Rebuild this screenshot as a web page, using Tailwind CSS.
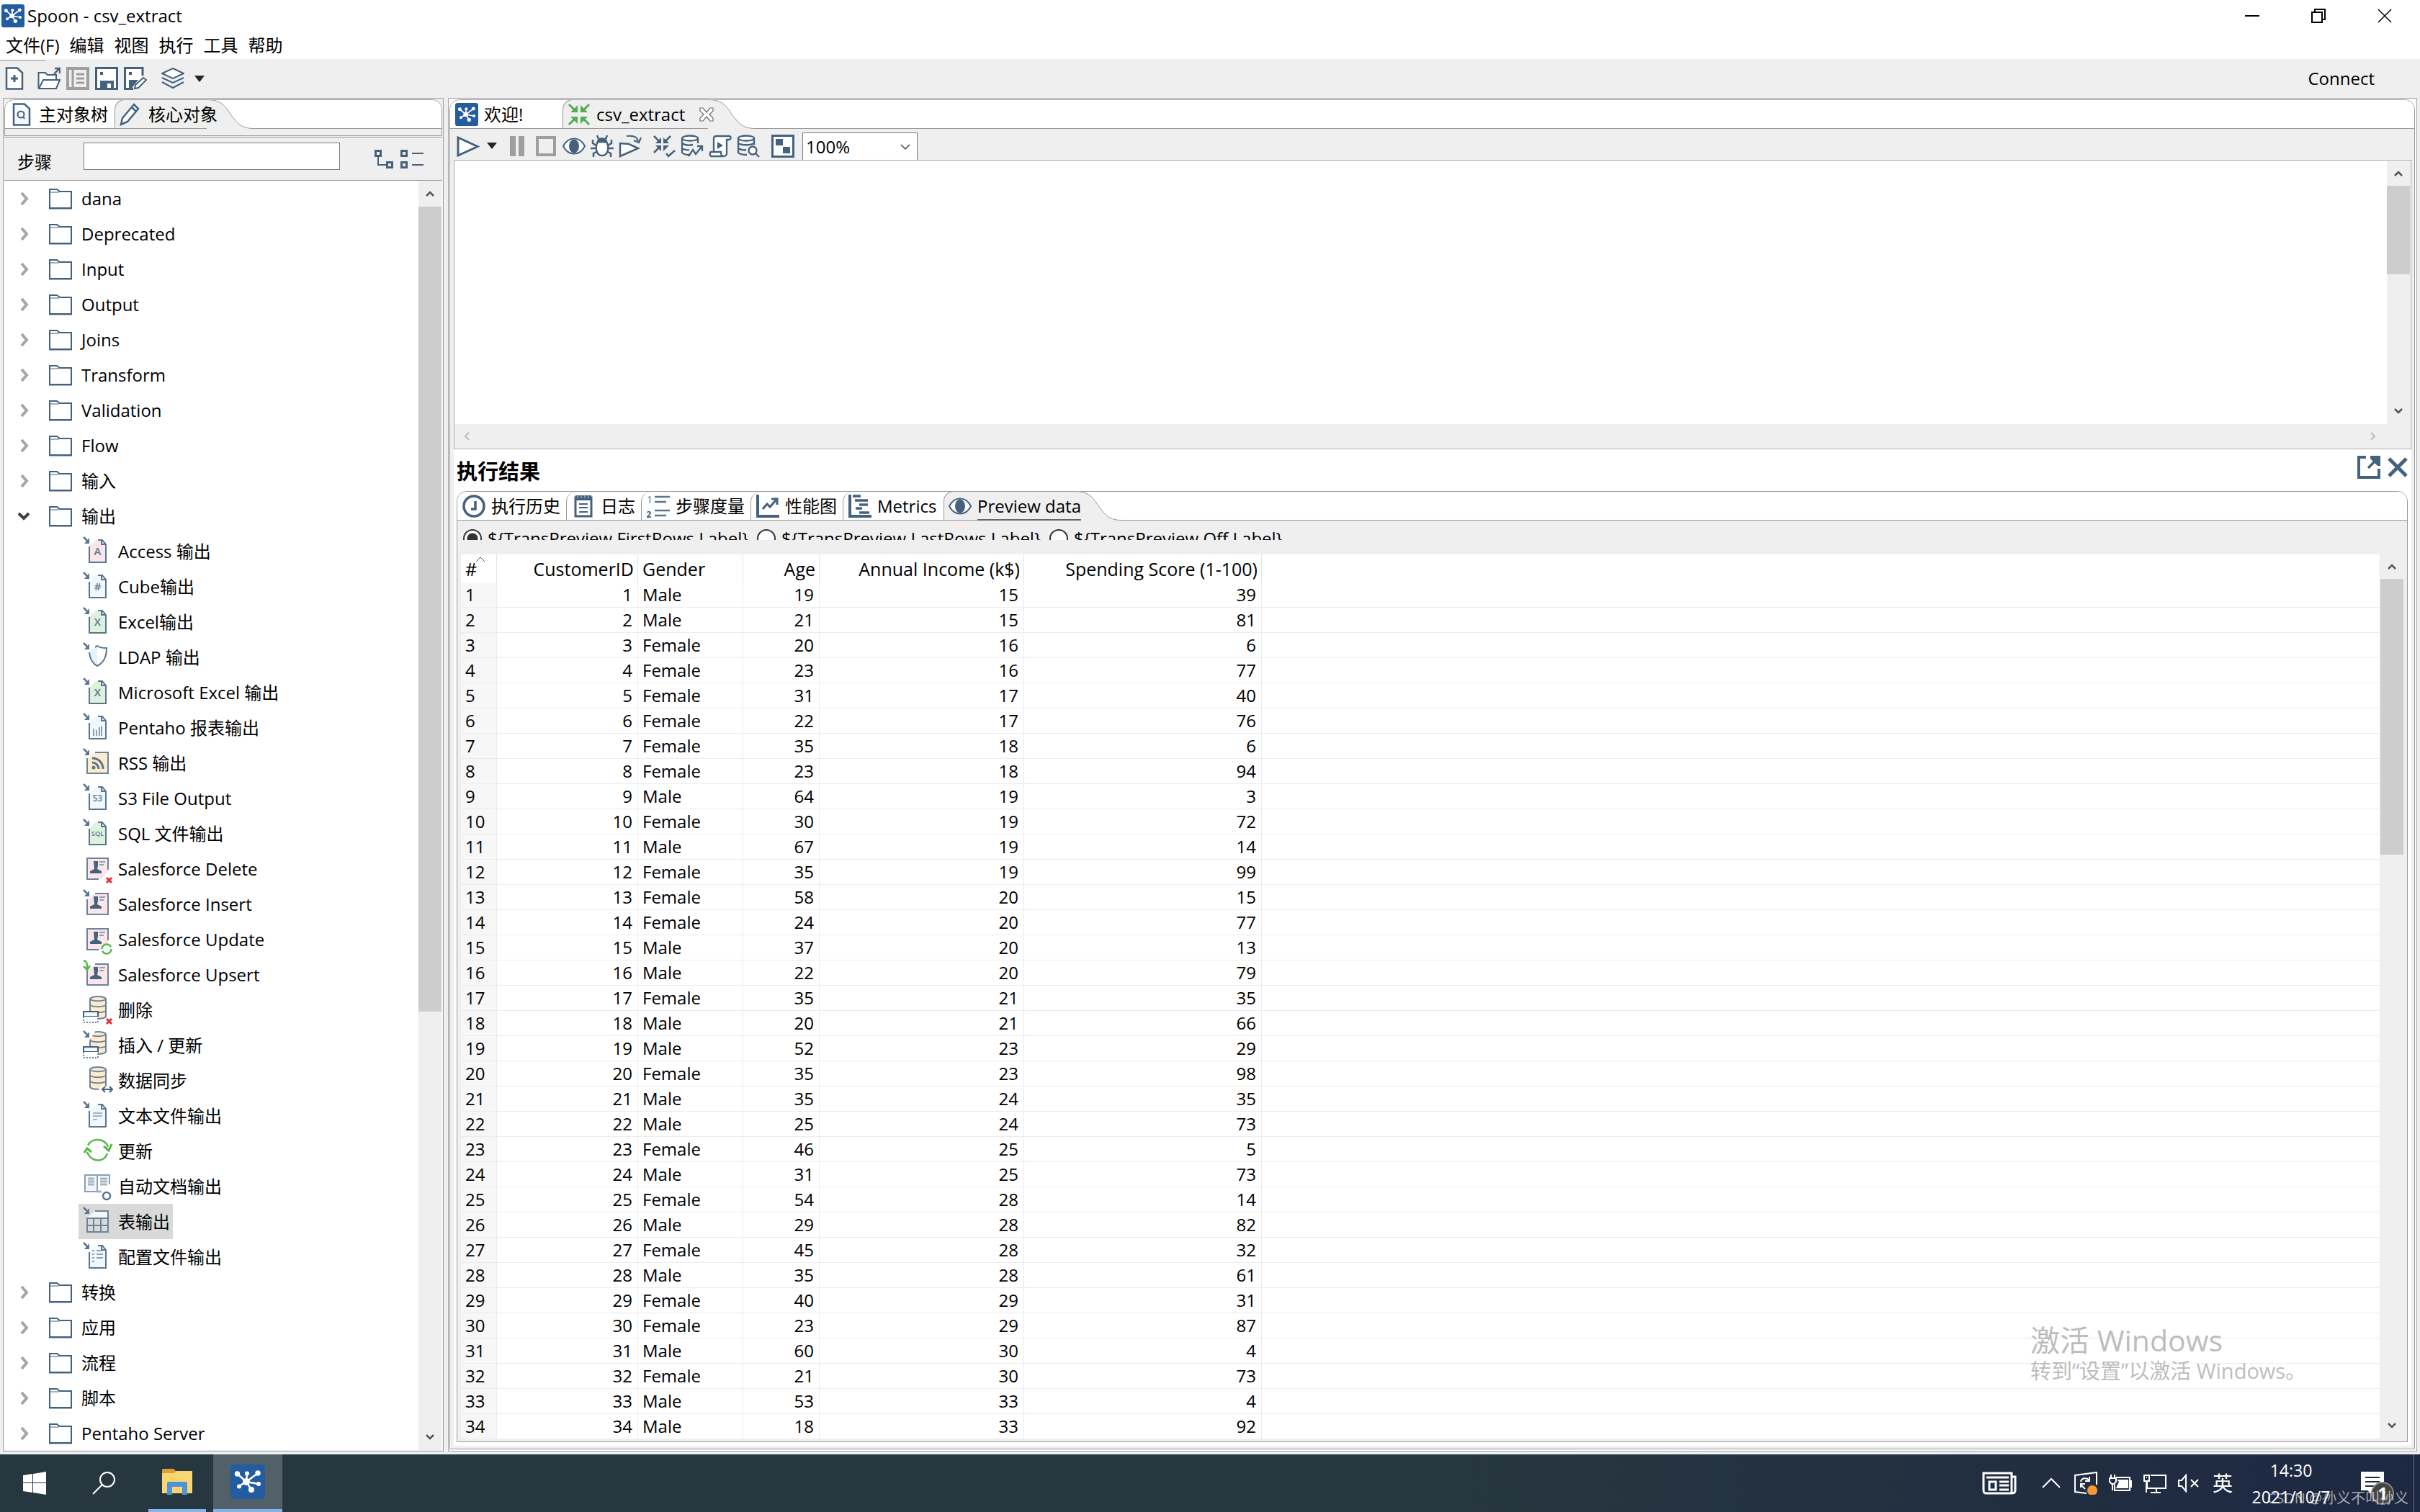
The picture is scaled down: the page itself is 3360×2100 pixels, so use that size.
<!DOCTYPE html>
<html lang="zh-CN">
<head>
  <meta charset="UTF-8">
  <meta name="viewport" content="width=device-width, initial-scale=1.0">
  <title>Spoon - csv_extract</title>
  <script src="https://cdn.jsdelivr.net/npm/@tailwindcss/browser@4"></script>
</head>
<body class="relative flex h-screen flex-col overflow-hidden bg-[#efefef] font-['Open_Sans','Noto_Sans_CJK_SC',sans-serif] text-[24px] leading-[28px] text-black">

  <!-- Icon sprite -->
  <svg class="hidden" xmlns="http://www.w3.org/2000/svg">
    <symbol id="spoon" viewBox="0 0 48 48">
      <rect width="48" height="48" rx="5" fill="#235c9f"/>
      <path d="M22 24 9.500 13M22 24 23 12M22 24 38 12M22 24 39 27M22 24 29 35M22 24 12 30" stroke="#fff" stroke-width="2.500"/>
      <g fill="#fff"><circle cx="22" cy="24" r="5"/><circle cx="9.500" cy="13" r="3.700"/><circle cx="23" cy="12.500" r="3"/><circle cx="38" cy="12" r="3.700"/><circle cx="39" cy="27" r="3"/><circle cx="29" cy="35" r="4"/><circle cx="12" cy="30.500" r="3"/></g>
    </symbol>
    <symbol id="new" viewBox="0 0 32 32"><path d="M5 1.500H20L27 8V30.500H5Z" fill="#fff" stroke="#44617d" stroke-width="2.500"/><path d="M16 11V21M11 16H21" stroke="#44617d" stroke-width="3"/></symbol>
    <symbol id="open" viewBox="0 0 32 32"><path d="M1.500 29V8H11L14 11H26V18" fill="#fff" stroke="#44617d" stroke-width="2"/><path d="M2 30 8 18H31L26 30Z" fill="#fff" stroke="#44617d" stroke-width="2"/><path d="M23 10 30 2M24 2H31V9" fill="none" stroke="#44617d" stroke-width="2.500"/></symbol>
    <symbol id="explore" viewBox="0 0 32 32"><rect x="2" y="2" width="28" height="28" fill="#efefef" stroke="#9e9e9e" stroke-width="4"/><path d="M9 3V29M14 10H25M14 16H25M14 22H25" stroke="#9e9e9e" stroke-width="3"/></symbol>
    <symbol id="save" viewBox="0 0 32 32"><path d="M1.500 1.500H30.500V30.500H1.500Z" fill="#fff" stroke="#44617d" stroke-width="3"/><path d="M7 7H11V11H7Z" fill="#44617d"/><path d="M7 19H26V30H22V23H17V30H7Z" fill="#44617d"/></symbol>
    <symbol id="saveas" viewBox="0 0 32 32"><path d="M26 12V1.500H1.500V30.500H13" fill="#fff" stroke="#44617d" stroke-width="3"/><path d="M7 7H11V11H7ZM7 18H20L12 28V30H7Z" fill="#44617d"/><path d="M15 30 16 25 27 15 31 18 20 29Z" fill="#fff" stroke="#44617d" stroke-width="2"/></symbol>
    <symbol id="layers" viewBox="0 0 32 32"><g fill="none" stroke="#44617d" stroke-width="2"><path d="M16 2 31 9 16 16 1 9Z" fill="#fff"/><path d="M1 15 16 22 31 15M1 21 16 29 31 21"/></g></symbol>
    <symbol id="filesearch" viewBox="0 0 32 32"><path d="M5 1.500H20L27 8V30.500H5Z" fill="#f4f8fb" stroke="#44617d" stroke-width="2.500"/><circle cx="15" cy="16" r="4.500" fill="none" stroke="#44617d" stroke-width="2"/><path d="M18 19 20 22" stroke="#44617d" stroke-width="2"/></symbol>
    <symbol id="pencil" viewBox="0 0 32 32"><path d="M2 30 4 21 20 2 26 8 11 26ZM17 6 23 12" fill="#fff" stroke="#44617d" stroke-width="2.500"/></symbol>
    <symbol id="expand" viewBox="0 0 30 28"><g fill="none" stroke="#44617d" stroke-width="3"><path d="M2.500 2.500H9.500V9.500H2.500ZM18.500 18.500H25.500V25.500H18.500Z"/><path d="M6 11V22H17" stroke-width="2"/></g></symbol>
    <symbol id="collapse" viewBox="0 0 34 28"><path d="M2.500 2.500H9.500V9.500H2.500ZM2.500 18.500H9.500V25.500H2.500Z" fill="none" stroke="#44617d" stroke-width="3"/><path d="M17 6H33M17 22H33" stroke="#44617d" stroke-width="2"/></symbol>
    <symbol id="folder" viewBox="0 0 32 30"><path d="M1 28V2H11L15 5H31V28Z" fill="#fff" stroke="#44617d" stroke-width="2"/><path d="M2 6H14" stroke="#44617d" stroke-width="1"/><path d="M0 29.500H32" stroke="#a5b4c2" stroke-width="1"/></symbol>
    <symbol id="transform" viewBox="0 0 32 32"><path d="M2 2 12 12M30 2 20 12M2 30 12 20M30 30 20 20" stroke="#55ad51" stroke-width="3"/><path d="M4 13H14V3ZM28 13H18V3ZM4 19H14V29ZM28 19H18V29Z" fill="#55ad51"/></symbol>
    <symbol id="closetab" viewBox="0 0 20 20"><path d="M1 1H5L10 7 15 1H19V5L14 10 19 15V19H15L10 13 5 19H1V15L6 10 1 5Z" fill="#fff" stroke="#6b6b6b" stroke-width="1.200"/></symbol>
    <symbol id="play" viewBox="0 0 32 32"><path d="M2 4V29L29 16.500Z" fill="#fff" stroke="#44617d" stroke-width="3"/></symbol>
    <symbol id="eye" viewBox="0 0 32 32"><path d="M1 16C8 2 24 2 31 16 24 30 8 30 1 16Z" fill="#fff" stroke="#44617d" stroke-width="2"/><ellipse cx="16" cy="16" rx="7" ry="9.500" fill="#44617d"/></symbol>
    <symbol id="bug" viewBox="0 0 32 32"><g fill="none" stroke="#44617d" stroke-width="2.500"><path d="M10 10C6 16 7 29 16 29S26 16 22 10Z" fill="#fff"/><path d="M10 10C10 4 22 4 22 10Z" fill="#44617d"/><path d="M11 6 9 1M21 6 23 1M8 15 3 12V7M24 15 29 12V7M7 19H0M25 19H32M8 24 4 26V31M24 24 28 26V31"/></g></symbol>
    <symbol id="replay" viewBox="0 0 32 32"><path d="M2 12V30L27 19 14 13Z" fill="#fff" stroke="#44617d" stroke-width="2.500"/><path d="M11 2C20 1 26 3 27 9M21 8 28 11 31 4" fill="none" stroke="#44617d" stroke-width="2.200"/></symbol>
    <symbol id="verify" viewBox="0 0 32 32"><path d="M2 2 11 11M25 2 16 11M2 25 11 16" stroke="#44617d" stroke-width="2.500"/><path d="M4 12H12V4ZM23 12H15V4ZM4 15H12V23ZM15 15H23L15 23Z" fill="#44617d"/><path d="M19 26 22 30 31 22" fill="none" stroke="#44617d" stroke-width="2.500"/></symbol>
    <symbol id="impact" viewBox="0 0 32 32"><g fill="none" stroke="#44617d" stroke-width="2.300"><path d="M2 5V25C5 28 9 28 12 28M24 5V12" fill="#fff"/><ellipse cx="13" cy="5" rx="11" ry="3.500" fill="#fff"/><path d="M2 12C6 15 12 15 17 14M2 19C5 21 8 22 12 21M11 30 17 21 21 27 29 17M23 16H30V23"/></g></symbol>
    <symbol id="script" viewBox="0 0 32 32"><g fill="#fff" stroke="#44617d" stroke-width="2.300"><path d="M7 24V5C7 2 9 2 11 2H28C32 2 31 7 28 7H25V26C25 30 22 30 20 30"/><path d="M20 30H4C1 30 1 24 4 24H17C17 27 18 30 20 30"/></g><path d="M12 10 20 15 12 20Z" fill="#44617d"/></symbol>
    <symbol id="dbsearch" viewBox="0 0 32 32"><g fill="none" stroke="#44617d" stroke-width="2.300"><path d="M2 5V25C5 28 9 28 14 28M24 5V14"/><ellipse cx="13" cy="5" rx="11" ry="3.500" fill="#fff"/><path d="M2 12C6 15 20 15 24 12M2 19C5 21 8 22 13 21"/><circle cx="22" cy="22" r="5.500" fill="#fff"/><path d="M26 26 31 31"/></g></symbol>
    <symbol id="grid" viewBox="0 0 32 32"><rect x="1.500" y="1.500" width="29" height="29" fill="#fff" stroke="#44617d" stroke-width="3"/><path d="M6 6H16V15H6ZM16 17H26V26H16Z" fill="#44617d"/></symbol>
    <symbol id="popout" viewBox="0 0 32 32"><path d="M12 2H2V30H30V18" fill="none" stroke="#44617d" stroke-width="4"/><path d="M15 17 29 3" stroke="#44617d" stroke-width="3.500"/><path d="M18 0H32V14H28L18 4Z" fill="#44617d"/></symbol>
    <symbol id="clock" viewBox="0 0 32 32"><circle cx="16" cy="16" r="14" fill="#fff" stroke="#44617d" stroke-width="3.500"/><path d="M18 9V20H12" fill="none" stroke="#44617d" stroke-width="3.500"/></symbol>
    <symbol id="log" viewBox="0 0 32 32"><path d="M5 4H27V30H5Z" fill="#fff" stroke="#44617d" stroke-width="3"/><path d="M5 1V8H27V1" fill="#44617d"/><path d="M8 0V5M13 0V5M18 0V5M23 0V5" stroke="#b9c5cf" stroke-width="1"/><path d="M10 13H22M10 18H22M10 24H22" stroke="#44617d" stroke-width="2"/></symbol>
    <symbol id="steps" viewBox="0 0 32 32"><path d="M11 3H32M11 10H27M11 22H32M11 29H27" stroke="#5b7590" stroke-width="2.500"/><text x="0" y="12" font-size="14" fill="#5b7590">1</text><text x="-1" y="32" font-size="13" font-weight="bold" fill="#44617d">2</text></symbol>
    <symbol id="perf" viewBox="0 0 32 32"><path d="M2 0V30H32" fill="none" stroke="#44617d" stroke-width="4"/><path d="M9 20 15 13 19 17 27 8M21 6H29V14" fill="none" stroke="#44617d" stroke-width="3"/></symbol>
    <symbol id="metrics" viewBox="0 0 32 32"><path d="M2 0V30H32" fill="none" stroke="#44617d" stroke-width="4"/><path d="M6 2H17M9 8H27M15 14H27M10 19H19M15 25H29" stroke="#44617d" stroke-width="3.500"/></symbol>
    <symbol id="up" viewBox="0 0 12 12"><path d="M1 9 6 4 11 9" fill="none" stroke="#555" stroke-width="2.500"/></symbol>
    <symbol id="down" viewBox="0 0 12 12"><path d="M1 3 6 8 11 3" fill="none" stroke="#555" stroke-width="2.500"/></symbol>
    <symbol id="slope" viewBox="0 0 64 41"><path d="M0 0C26 0 28 16 38 27 46 37 52 40 64 40.500V41H0Z" fill="#efefef"/><path d="M0 .5C26 .5 28 16 38 27 46 37 52 40 64 40.500" fill="none" stroke="#999"/></symbol>
    <!-- Small overlays for the step icons -->
    <symbol id="in" viewBox="0 0 42 42"><path d="M1 1 8 8" stroke="#5b7590" stroke-width="2.500"/><path d="M9 2V10H2Z" fill="#5b7590"/></symbol>
    <symbol id="del" viewBox="0 0 42 42"><path d="M33 33 40 40M40 33 33 40" stroke="#d8373c" stroke-width="3"/></symbol>
    <symbol id="contact" viewBox="0 0 42 42"><path d="M15 10H21V16L20 21 26 24V27H10V24L16 21Z" fill="#44617d"/><path d="M23 11H31M23 15H29" stroke="#8fa0b0" stroke-width="2"/></symbol>
    <symbol id="db" viewBox="0 0 42 42"><path d="M10 5V30C14 34 28 34 32 30V5C28 1 14 1 10 5Z" fill="#fcebcd" stroke="#6d8398" stroke-width="2"/><path d="M10 6C15 9 27 9 32 6M10 14C15 17 27 17 32 14M10 22C15 25 27 25 32 22" fill="none" stroke="#6d8398" stroke-width="2"/></symbol>
    <symbol id="rows" viewBox="0 0 42 42"><path d="M1 23H21V30H1Z" fill="#f0f7fd" stroke="#44617d" stroke-width="2"/><path d="M1 30V38H21V30" fill="#fff" stroke="#6d8398" stroke-width="2" stroke-dasharray="2 2"/></symbol>
  </svg>

  <!-- Title bar -->
  <header class="flex h-11 shrink-0 items-center bg-white pr-[3px] pl-0.5">
    <svg class="h-8 w-8"><use href="#spoon"/></svg>
    <h1 class="ml-1 grow">Spoon - csv_extract</h1>
    <button class="flex h-11 w-[92px] items-center justify-center" aria-label="最小化"><span class="h-0.5 w-5 bg-black"></span></button>
    <button class="flex h-11 w-[92px] items-center justify-center" aria-label="还原"><svg class="h-5 w-5" viewBox="0 0 20 20" fill="none" stroke="#000" stroke-width="2"><path d="M1 5H15V19H1ZM5 5V1H19V15H15"/></svg></button>
    <button class="flex h-11 w-[92px] items-center justify-center" aria-label="关闭"><svg class="h-5 w-5" viewBox="0 0 20 20" stroke="#000" stroke-width="1.500"><path d="M1 1 19 19M19 1 1 19"/></svg></button>
  </header>

  <!-- Menu -->
  <nav class="flex h-[38px] shrink-0 items-center gap-3.5 bg-white pl-2">
    <button>文件(F)</button>
    <button>编辑</button>
    <button>视图</button>
    <button>执行</button>
    <button>工具</button>
    <button>帮助</button>
  </nav>

  <!-- Main toolbar -->
  <div class="relative flex h-[54px] shrink-0 items-center gap-2 pl-1">
    <span class="absolute left-0 top-0.5 h-px w-16 bg-[#a0a0a0]"></span>
    <button class="mr-2" aria-label="新建"><svg class="h-8 w-8"><use href="#new"/></svg></button>
    <button aria-label="打开"><svg class="h-8 w-8"><use href="#open"/></svg></button>
    <button aria-label="浏览"><svg class="h-8 w-8"><use href="#explore"/></svg></button>
    <button aria-label="保存"><svg class="h-8 w-8"><use href="#save"/></svg></button>
    <button aria-label="另存为"><svg class="h-8 w-8"><use href="#saveas"/></svg></button>
    <button class="ml-3 flex items-center gap-3.5" aria-label="透视图">
      <svg class="h-8 w-8"><use href="#layers"/></svg>
      <svg class="h-[9px] w-3.5" viewBox="0 0 14 9"><path d="M0 0H14L7 9Z" fill="#222"/></svg>
    </button>
    <button class="ml-auto mr-[63px]">Connect</button>
  </div>

  <main class="flex min-h-0 grow gap-1.5 px-1 pb-1">

    <!-- Left panel -->
    <aside class="flex w-[612px] shrink-0 flex-col border border-[#a3a3ab] bg-[#efefef] p-px">
      <div class="h-[51px] shrink-0 rounded-t-[14px] border border-[#999]">
        <div class="flex h-10 rounded-t-[13px] border-b border-[#999] bg-white">
          <button class="flex w-[152px] shrink-0 items-center gap-2 pl-[7px] whitespace-nowrap"><svg class="h-8 w-8 shrink-0"><use href="#filesearch"/></svg>主对象树</button>
          <button class="relative z-10 -mt-px flex h-10 w-[128px] shrink-0 items-center gap-2 rounded-tl-[14px] border-t border-l border-[#999] bg-[#efefef] pl-1.5 whitespace-nowrap"><svg class="h-8 w-8 shrink-0"><use href="#pencil"/></svg>核心对象</button>
          <svg class="-mt-px h-[41px] w-16 shrink-0"><use href="#slope"/></svg>
        </div>
      </div>
      <div class="mt-px flex h-[61px] shrink-0 items-center border-t border-b border-[#999] pr-[25px] pl-[18px]">
        <label for="step" class="w-[92px] pt-2">步骤</label>
        <input id="step" type="text" class="mb-2 h-[38px] w-[356px] border border-[#7a7a7a] bg-white px-1 outline-none">
        <button class="ml-auto" aria-label="展开"><svg class="h-7 w-[30px]"><use href="#expand"/></svg></button>
        <button class="ml-1.5" aria-label="折叠"><svg class="h-7 w-[34px]"><use href="#collapse"/></svg></button>
      </div>
      <div class="flex min-h-0 grow bg-white">
        <ul id="tree" class="min-w-0 grow overflow-hidden"></ul>
        <div class="mr-px flex w-8 shrink-0 flex-col bg-[#efefef]">
          <div class="flex h-9 shrink-0 items-center justify-center"><svg class="h-3 w-3"><use href="#up"/></svg></div>
          <div class="h-[1118px] bg-[#cdcdcd]"></div>
          <div class="mt-auto flex h-9 shrink-0 items-center justify-center"><svg class="h-3 w-3"><use href="#down"/></svg></div>
        </div>
      </div>
    </aside>

    <!-- Editor panel -->
    <section class="flex min-w-0 grow flex-col border border-[#a3a3ab] bg-white pt-px pr-0.5 pb-0.5 pl-px">
      <div class="flex min-h-0 grow flex-col rounded-t-[14px] border border-[#999] bg-[#efefef]">
        <div class="flex h-10 shrink-0 rounded-t-[13px] border-b border-[#999] bg-white">
          <button class="flex w-[156px] shrink-0 items-center gap-2 pl-[7px] whitespace-nowrap"><svg class="h-8 w-8"><use href="#spoon"/></svg>欢迎!</button>
          <div class="relative z-10 -mt-px flex h-10 w-[202px] shrink-0 items-center rounded-tl-[14px] border-t border-l border-[#999] bg-[#efefef] pl-1.5">
            <button class="flex shrink-0 items-center gap-2"><svg class="h-8 w-8 shrink-0"><use href="#transform"/></svg>csv_extract</button>
            <button class="ml-auto -mr-2" aria-label="关闭标签"><svg class="h-5 w-5"><use href="#closetab"/></svg></button>
          </div>
          <svg class="-mt-px h-[41px] w-16 shrink-0"><use href="#slope"/></svg>
        </div>

        <div class="flex h-[43px] shrink-0 items-center pt-1 pl-[9px]">
          <button class="flex items-center gap-2.5" aria-label="运行"><svg class="h-8 w-8"><use href="#play"/></svg><svg class="h-[9px] w-3.5" viewBox="0 0 14 9"><path d="M0 0H14L7 9Z" fill="#222"/></svg></button>
          <button class="ml-[18px] flex gap-1" aria-label="暂停"><span class="h-7 w-2 bg-[#9e9e9e]"></span><span class="h-7 w-2 bg-[#9e9e9e]"></span></button>
          <button class="ml-4 h-7 w-7 border-4 border-[#9e9e9e]" aria-label="停止"></button>
          <div class="ml-[9px] flex items-center gap-[7px]">
            <button aria-label="预览"><svg class="h-8 w-8"><use href="#eye"/></svg></button>
            <button aria-label="调试"><svg class="h-8 w-8"><use href="#bug"/></svg></button>
            <button aria-label="重放"><svg class="h-8 w-8"><use href="#replay"/></svg></button>
          </div>
          <div class="ml-[15px] flex items-center gap-[7px]">
            <button aria-label="校验"><svg class="h-8 w-8"><use href="#verify"/></svg></button>
            <button aria-label="影响分析"><svg class="h-8 w-8"><use href="#impact"/></svg></button>
            <button aria-label="生成SQL"><svg class="h-8 w-8"><use href="#script"/></svg></button>
            <button aria-label="浏览数据库"><svg class="h-8 w-8"><use href="#dbsearch"/></svg></button>
          </div>
          <button class="ml-4" aria-label="显示结果"><svg class="h-8 w-8"><use href="#grid"/></svg></button>
          <div class="relative ml-[11px] self-end">
            <select class="block h-[38px] w-40 appearance-none border border-b-0 border-[#7a7a7a] bg-white pl-1 outline-none" aria-label="缩放">
              <option>200%</option>
              <option selected>100%</option>
              <option>50%</option>
            </select>
            <svg class="pointer-events-none absolute top-3.5 right-2.5 h-3 w-3.5" viewBox="0 0 14 12"><path d="M1 3 7 9 13 3" fill="none" stroke="#444" stroke-width="1.500"/></svg>
          </div>
        </div>

        <!-- Canvas -->
        <div class="mr-1 ml-[5px] flex h-[402px] shrink-0 flex-col border border-[#a3a3ab] bg-white p-px">
          <div class="flex min-h-0 grow">
            <div class="grow"></div>
            <div class="flex w-8 flex-col bg-[#efefef]">
              <div class="flex h-[34px] items-center justify-center"><svg class="h-3 w-3"><use href="#up"/></svg></div>
              <div class="h-[123px] bg-[#cdcdcd]"></div>
              <div class="mt-auto flex h-9 items-center justify-center"><svg class="h-3 w-3"><use href="#down"/></svg></div>
            </div>
          </div>
          <div class="flex h-[33px] shrink-0 items-center justify-between bg-[#efefef] pr-[45px] pl-2.5">
            <svg class="h-3 w-3" viewBox="0 0 12 12"><path d="M9 1 4 6 9 11" fill="none" stroke="#bbb" stroke-width="2"/></svg>
            <svg class="h-3 w-3" viewBox="0 0 12 12"><path d="M3 1 8 6 3 11" fill="none" stroke="#bbb" stroke-width="2"/></svg>
          </div>
        </div>

        <!-- Execution results -->
        <div class="mr-1 mb-1 ml-[5px] flex min-h-0 grow flex-col bg-white pr-[5px] pb-[5px] pl-1">
          <div class="flex h-[58px] shrink-0 items-center">
            <h2 class="grow pt-1 text-[29px] leading-[36px] font-bold">执行结果</h2>
            <button class="mb-2" aria-label="最大化"><svg class="h-8 w-8"><use href="#popout"/></svg></button>
            <button class="mb-2 ml-2.5" aria-label="关闭结果"><svg class="h-7 w-7" viewBox="0 0 28 28"><path d="M2 2 26 26M26 2 2 26" stroke="#44617d" stroke-width="5"/></svg></button>
          </div>

          <div class="flex min-h-0 grow flex-col rounded-t-[14px] border border-[#999] bg-[#efefef]">
            <div class="flex h-10 shrink-0 rounded-t-[13px] border-b border-[#999] bg-white whitespace-nowrap">
              <button class="flex w-[151px] items-center gap-2 pl-[7px]"><svg class="h-8 w-8"><use href="#clock"/></svg>执行历史</button>
              <button class="flex w-[104px] items-center gap-2 rounded-tl-[14px] border-l border-[#999] pl-[7px]"><svg class="h-8 w-8"><use href="#log"/></svg>日志</button>
              <button class="flex w-[152px] items-center gap-2 rounded-tl-[14px] border-l border-[#999] pl-[7px]"><svg class="h-8 w-8"><use href="#steps"/></svg>步骤度量</button>
              <button class="flex w-[128px] items-center gap-2 rounded-tl-[14px] border-l border-[#999] pl-[7px]"><svg class="h-8 w-8"><use href="#perf"/></svg>性能图</button>
              <button class="flex w-[140px] items-center gap-2 rounded-tl-[14px] border-l border-[#999] pl-[7px]"><svg class="h-8 w-8"><use href="#metrics"/></svg>Metrics</button>
              <button class="relative z-10 -mt-px flex h-10 w-[182px] items-center gap-2 rounded-tl-[14px] border-t border-l border-[#999] bg-[#efefef] pl-1.5"><svg class="h-8 w-8 shrink-0"><use href="#eye"/></svg><span class="h-10 border-b-2 border-[#666] pt-1.5">Preview data</span></button>
              <svg class="-mt-px h-[41px] w-16 shrink-0"><use href="#slope"/></svg>
            </div>

            <div class="mt-3 mb-5 h-[15px] shrink-0 overflow-hidden pl-2">
              <div class="flex h-[26px] items-center gap-2 whitespace-nowrap">
                <label class="flex w-[400px] items-center gap-2"><input type="radio" name="preview" checked class="h-[26px] w-[26px] shrink-0 appearance-none rounded-full border-2 border-[#333] bg-white checked:bg-[radial-gradient(circle,#333_7px,white_8px)]">${TransPreview.FirstRows.Label}</label>
                <label class="flex w-[398px] items-center gap-2"><input type="radio" name="preview" class="h-[26px] w-[26px] shrink-0 appearance-none rounded-full border-2 border-[#333] bg-white">${TransPreview.LastRows.Label}</label>
                <label class="flex items-center gap-2"><input type="radio" name="preview" class="h-[26px] w-[26px] shrink-0 appearance-none rounded-full border-2 border-[#333] bg-white">${TransPreview.Off.Label}</label>
              </div>
            </div>

            <div class="mb-1 flex min-h-0 grow pr-[5px] pl-[5px]">
              <div class="min-w-0 grow overflow-hidden bg-white">
                <table class="w-full table-fixed border-separate border-spacing-0">
                  <colgroup>
                    <col class="w-[50px]"><col class="w-[196px]"><col class="w-[146px]"><col class="w-[106px]"><col class="w-[284px]"><col class="w-[330px]"><col>
                  </colgroup>
                  <thead>
                    <tr class="h-[39px] text-[25px] *:border-r *:border-[#e5e5e5] *:p-0 *:font-normal">
                      <th class="relative text-left"><span class="pl-1.5">#</span><svg class="absolute top-0.5 left-5 h-2.5 w-3.5" viewBox="0 0 14 10"><path d="M1 8 7 2 13 8" fill="none" stroke="#555"/></svg></th>
                      <th class="text-right"><span class="pr-[5px]">CustomerID</span></th>
                      <th class="text-left"><span class="pl-1.5">Gender</span></th>
                      <th class="text-right"><span class="pr-[5px]">Age</span></th>
                      <th class="text-right"><span class="pr-[5px]">Annual Income (k$)</span></th>
                      <th class="text-right"><span class="pr-[5px]">Spending Score (1-100)</span></th>
                      <th></th>
                    </tr>
                  </thead>
                  <tbody id="rows-body"></tbody>
                </table>
              </div>
              <div class="flex w-8 shrink-0 flex-col">
                <div class="flex h-[34px] items-center justify-center"><svg class="h-3 w-3"><use href="#up"/></svg></div>
                <div class="h-[383px] bg-[#cdcdcd]"></div>
                <div class="mt-auto flex h-9 items-center justify-center"><svg class="h-3 w-3"><use href="#down"/></svg></div>
              </div>
            </div>
          </div>
        </div>
      </div>
    </section>
  </main>

  <!-- Activation notice -->
  <div class="pointer-events-none absolute right-[160px] bottom-[176px] w-[381px] whitespace-nowrap text-[#bdbdbd]">
    <p class="text-[41px] leading-[46px]">激活 Windows</p>
    <p class="text-[29px] leading-[40px]">转到“设置”以激活 Windows。</p>
  </div>

  <!-- Taskbar -->
  <footer class="relative flex h-20 shrink-0 items-center bg-linear-to-r from-[#27373f] from-60% to-[#1d2842] text-white">
    <button class="flex h-20 w-24 items-center justify-center" aria-label="开始"><svg class="h-8 w-8" viewBox="0 0 32 32" fill="#fff"><path d="M0 5 13 3V15H0ZM14 3 32 0V15H14ZM0 16H13V29L0 27ZM14 16H32V32L14 29Z"/></svg></button>
    <button class="flex h-20 w-24 items-center justify-center" aria-label="搜索"><svg class="h-8 w-8" viewBox="0 0 32 32" fill="none" stroke="#fff" stroke-width="2"><circle cx="21" cy="11" r="10"/><path d="M14 18 1 31"/></svg></button>
    <button class="ml-3.5 flex h-20 w-20 items-center justify-center border-b-4 border-[#85b5e8]" aria-label="文件资源管理器"><svg class="h-9 w-[42px]" viewBox="0 0 42 36"><path d="M0 2Q0 0 2 0H16L20 4V8H0Z" fill="#dc9e35"/><path d="M0 6H17L20 3H42V34H0Z" fill="#f9d671"/><path d="M7 36V20Q7 18 9 18H33Q35 18 35 20V36H28V25H14V36Z" fill="#4f93d8"/></svg></button>
    <button class="ml-2.5 flex h-20 w-24 items-center justify-center border-b-4 border-[#85b5e8] bg-[#526067]" aria-label="Spoon"><svg class="h-12 w-12"><use href="#spoon"/></svg></button>

    <div class="ml-auto flex h-20 items-center">
      <svg class="h-8 w-12" viewBox="0 0 48 32" fill="none" stroke="#fff" stroke-width="3"><path d="M2 2H41V30H6Q2 30 2 26ZM41 7H46V26Q46 30 41 30M6 8H37" /><path d="M10 14H19V25H10ZM24 14H37M24 19H37M24 25H37"/></svg>
      <svg class="ml-[35px] h-4 w-[26px]" viewBox="0 0 26 16"><path d="M1 14 13 2 25 14" fill="none" stroke="#fff" stroke-width="2"/></svg>
      <svg class="ml-[19px] h-8 w-8" viewBox="0 0 32 32" fill="none" stroke="#fff" stroke-width="2"><path d="M31 18V1L1 5V28L17 30M9 14C10 8 18 8 20 12M21 7V13H15M9 22V17H15M9 18 15 24"/><circle cx="25" cy="26" r="7" fill="#f39b33" stroke="none"/></svg>
      <svg class="ml-4 h-8 w-8" viewBox="0 0 32 32"><path d="M10 8H29V26H8V18M29 13H31V21H29" fill="none" stroke="#fff" stroke-width="2"/><path d="M11 11H27V23H10L14 14Z" fill="#fff"/><path d="M3 4V9M8 4V9M1 9H10V14L7 17H4L1 14ZM5 17V26" fill="none" stroke="#fff" stroke-width="2"/></svg>
      <svg class="ml-4 h-8 w-8" viewBox="0 0 32 32" fill="none" stroke="#fff" stroke-width="2"><path d="M10 5H31V23H5V14M18 23V29M10 29H24M1 5H8V13H1ZM4 8H5M4 13V29"/></svg>
      <svg class="ml-4 h-8 w-8" viewBox="0 0 32 32" fill="none" stroke="#fff" stroke-width="2"><path d="M1 12H5L11 5V27L5 20H1ZM18 11 28 21M28 11 18 21"/></svg>
      <button class="ml-4 text-[28px] leading-[36px]">英</button>
      <div class="ml-[19px] w-[124px] text-center text-[23px]">
        <p class="mb-[9px]">14:30</p>
        <p>2021/10/7</p>
      </div>
      <div class="relative ml-[35px] mr-[50px] h-8 w-8">
        <svg class="h-8 w-8" viewBox="0 0 32 32"><path d="M0 0H32V26H16V32L9 26H0Z" fill="#fff"/><path d="M6 8H26M6 14H26M6 20H20" stroke="#1e2a42" stroke-width="2"/></svg>
        <span class="absolute top-3.5 left-3.5 flex h-8 w-8 items-center justify-center rounded-full border-2 border-[#888] bg-[#444] font-bold">1</span>
      </div>
    </div>
    <span class="absolute top-0 right-2 h-20 w-px bg-[#6d7586]"></span>
    <p class="absolute right-4 bottom-1 text-[20px] leading-[30px] whitespace-nowrap text-white/60">CSDN @孙义不叫孙义</p>
  </footer>

  <script>
    const tree = document.getElementById('tree');
    const rowsBody = document.getElementById('rows-body');

    // Step icons are drawn on a 42x42 box
    const page = (fill, inner) => `<path d="M9 14 18 5H26L32 11V36H9Z" fill="${fill}"/><path d="M9 14V36H32V11L27 5H21M26 5V11H32" fill="none" stroke="#5b7590" stroke-width="2"/>${inner}<use href="#in"/>`;
    const letter = (t, size) => `<text x="20.500" y="${20 + size / 2.4}" text-anchor="middle" font-size="${size}" font-weight="600" fill="#5f7891">${t}</text>`;
    const card = (fill, d, inner) => `<path d="M6 15 17 6H35V36H6Z" fill="${fill}"/><path d="${d}" fill="none" stroke="#6d8398" stroke-width="2"/>${inner}`;
    const fromLeft = 'M6 14V35H35V6H17';
    const toRight = 'M35 22V6H6V35H22';
    const contactBg = '<path d="M6 7H35V24L26 35H6Z" fill="#fae6e8"/>';
    const icons = {
      access: page('#fae6e8', letter('A', 15)),
      cube: page('#f0f7fd', letter('#', 15)),
      excel: page('#def1dc', letter('X', 15)),
      ldap: '<path d="M9 11 20 6V33Q9 26 9 11Z" fill="#e8f2fb"/><path d="M9 14C10 24 14 30 20 33 28 29 33 20 33 8 27 8 23 7 20 5L17 7" fill="none" stroke="#5b7590" stroke-width="2"/><use href="#in"/>',
      report: page('#f0f7fd', '<path d="M15 22V32M19 24V32M23 20V32M26 18V32" stroke="#8fa0b0" stroke-width="2"/>'),
      rss: card('#fcebcd', fromLeft, '<path d="M13 14C21 14 28 20 28 29M13 20C18 20 22 24 22 29" fill="none" stroke="#5b7590" stroke-width="3"/><circle cx="15" cy="27" r="2.500" fill="#5b7590"/><use href="#in"/>'),
      s3: page('#f0f7fd', letter('S3', 12)),
      sql: page('#def1dc', letter('SQL', 9)),
      sfDelete: contactBg + card('none', toRight, '<use href="#contact"/><use href="#del"/>'),
      sfInsert: card('#fae6e8', fromLeft, '<use href="#contact"/><use href="#in"/>'),
      sfUpdate: contactBg + card('none', toRight, '<use href="#contact"/><circle cx="33" cy="34" r="6.500" fill="#fff" stroke="#56b848" stroke-width="2.500" stroke-dasharray="17 3"/>'),
      sfUpsert: card('#fae6e8', fromLeft, '<use href="#contact"/><path d="M1 1C6 2 6 6 6 12M1 9 6 14 10 8" fill="none" stroke="#56b848" stroke-width="2.500"/>'),
      del: '<use href="#db"/><use href="#rows"/><use href="#del"/>',
      upsert: '<use href="#db"/><path d="M0 0H18L9 14H0Z" fill="#fff"/><use href="#rows"/><use href="#in"/>',
      sync: '<use href="#db"/><path d="M26 33H40M31 28 26 33 31 38M36 28 41 33 36 38" fill="none" stroke="#fff" stroke-width="6"/><path d="M27 33H41M31 29 27 33 31 37M37 29 41 33 37 37" fill="none" stroke="#44617d" stroke-width="2"/>',
      text: page('#f0f7fd', '<path d="M14 17H27M14 21H27M14 26H20" stroke="#a5b4c2" stroke-width="2"/>'),
      update: '<path d="M7 13C12 2 30 2 35 15M34 24C29 38 11 36 6 22" fill="none" stroke="#56b848" stroke-width="2.500"/><path d="M29 14 36 20 40 11M2 23 6 17 12 22" fill="none" stroke="#56b848" stroke-width="3"/>',
      doc: '<path d="M3 5H20V28H3ZM20 5H37V18" fill="#f0f7fd" stroke="#8fa0b0" stroke-width="2"/><path d="M7 10H16M7 14H16M7 18H16M24 10H34M24 14H34M24 18H34M20 28H26" stroke="#a5b4c2" stroke-width="3"/><circle cx="33" cy="34" r="5" fill="#fff" stroke="#5b7590" stroke-width="2.500"/>',
      table: '<path d="M6 15 17 6H35V15Z" fill="#f0f7fd"/><path d="M6 15V35H35V6H17M6 16H35M6 26H35M15 16V35M25 16V35" fill="none" stroke="#6d8398" stroke-width="2"/><use href="#in"/>',
      config: page('#f0f7fd', '<path d="M13 12H16M19 12H28M13 17H16M19 17H28M13 22H16M19 22H28M13 27H16" stroke="#8fa0b0" stroke-width="2"/>')
    };

    const outputs = [
      ['access', 'Access 输出'], ['cube', 'Cube输出'], ['excel', 'Excel输出'], ['ldap', 'LDAP 输出'],
      ['excel', 'Microsoft Excel 输出'], ['report', 'Pentaho 报表输出'], ['rss', 'RSS 输出'],
      ['s3', 'S3 File Output'], ['sql', 'SQL 文件输出'], ['sfDelete', 'Salesforce Delete'],
      ['sfInsert', 'Salesforce Insert'], ['sfUpdate', 'Salesforce Update'], ['sfUpsert', 'Salesforce Upsert'],
      ['del', '删除'], ['upsert', '插入 / 更新'], ['sync', '数据同步'], ['text', '文本文件输出'],
      ['update', '更新'], ['doc', '自动文档输出'], ['table', '表输出'], ['config', '配置文件输出']
    ];
    const folders = ['dana', 'Deprecated', 'Input', 'Output', 'Joins', 'Transform', 'Validation', 'Flow', '输入', '输出', '转换', '应用', '流程', '脚本', 'Pentaho Server'];

    folders.forEach((name) => {
      const open = name === '输出';
      const arrow = open
        ? '<svg class="mr-[26px] h-4 w-[18px]" viewBox="0 0 18 16"><path d="M2 4 9 11 16 4" fill="none" stroke="#404040" stroke-width="4"/></svg>'
        : '<svg class="mr-[26px] h-[18px] w-[18px]" viewBox="0 0 18 18"><path d="M6 1 13 9 6 17" fill="none" stroke="#a6a6a6" stroke-width="4"/></svg>';
      tree.innerHTML += `<li class="flex h-[49px] items-center pt-px pl-[18px]">${arrow}<svg class="mr-[13px] h-[30px] w-8"><use href="#folder"/></svg>${name}</li>`;
      if (open) {
        outputs.forEach(([icon, label]) => {
          const bg = label === '表输出' ? 'bg-[#d9d9d9]' : '';
          tree.innerHTML += `<li class="ml-[103px] flex h-[49px] w-fit items-center pt-px pr-1 pl-1.5 whitespace-nowrap ${bg}"><svg class="mr-[7px] h-[42px] w-[42px]" viewBox="0 0 42 42">${icons[icon]}</svg>${label}</li>`;
        });
      }
    });

    // Gender, age, annual income, spending score
    const customers = [
      ['M', 19, 15, 39], ['M', 21, 15, 81], ['F', 20, 16, 6], ['F', 23, 16, 77], ['F', 31, 17, 40],
      ['F', 22, 17, 76], ['F', 35, 18, 6], ['F', 23, 18, 94], ['M', 64, 19, 3], ['F', 30, 19, 72],
      ['M', 67, 19, 14], ['F', 35, 19, 99], ['F', 58, 20, 15], ['F', 24, 20, 77], ['M', 37, 20, 13],
      ['M', 22, 20, 79], ['F', 35, 21, 35], ['M', 20, 21, 66], ['M', 52, 23, 29], ['F', 35, 23, 98],
      ['M', 35, 24, 35], ['M', 25, 24, 73], ['F', 46, 25, 5], ['M', 31, 25, 73], ['F', 54, 28, 14],
      ['M', 29, 28, 82], ['F', 45, 28, 32], ['M', 35, 28, 61], ['F', 40, 29, 31], ['F', 23, 29, 87],
      ['M', 60, 30, 4], ['F', 21, 30, 73], ['M', 53, 33, 4], ['M', 18, 33, 92]
    ];
    rowsBody.innerHTML = customers.map(([g, age, income, score], i) => `
      <tr class="h-[35px] *:border-r *:border-b *:border-[#ececef] *:py-0">
        <td class="bg-[#f7f7f7] pr-0 pl-1.5">${i + 1}</td>
        <td class="pr-[7px] text-right">${i + 1}</td>
        <td class="pl-1.5">${g === 'M' ? 'Male' : 'Female'}</td>
        <td class="pr-[7px] text-right">${age}</td>
        <td class="pr-[7px] text-right">${income}</td>
        <td class="pr-[7px] text-right">${score}</td>
        <td></td>
      </tr>`).join('');
  </script>
</body>
</html>
